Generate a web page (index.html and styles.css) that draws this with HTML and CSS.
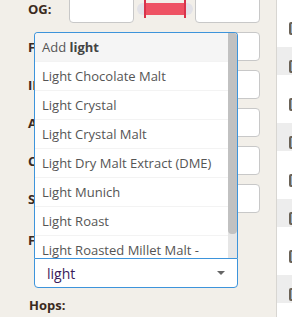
FILE: index.html
```html
<!DOCTYPE html>
<html lang="en">
<head>
    <meta charset="UTF-8">
    <title>Recipe</title>
    <link rel="stylesheet" href="styles.css">
</head>
<body>

    <div class="main">
        <div class="row">
            <label>OG:</label>
            <input class="field short" type="text">
            <div class="range"><div class="range-bar"></div></div>
            <input class="field short" type="text">
        </div>
        <div class="row"><label>FG:</label><input class="field" type="text"></div>
        <div class="row"><label>IBU:</label><input class="field" type="text"></div>
        <div class="row"><label>ABV:</label><input class="field" type="text"></div>
        <div class="row"><label>Color:</label><input class="field" type="text"></div>
        <div class="row"><label>SRM:</label><input class="field" type="text"></div>

        <h4 class="section">Fermentables:</h4>
        <div class="select-wrap">
            <div class="dropdown">
                <ul class="results">
                    <li class="active">Add <b>light</b></li>
                    <li>Light Chocolate Malt</li>
                    <li>Light Crystal</li>
                    <li>Light Crystal Malt</li>
                    <li>Light Dry Malt Extract (DME)</li>
                    <li>Light Munich</li>
                    <li>Light Roast</li>
                    <li>Light Roasted Millet Malt - Gluten Free</li>
                </ul>
                <div class="scrollbar"><div class="thumb"></div></div>
            </div>
            <div class="select">
                <span class="typed">light</span>
                <span class="caret"></span>
            </div>
        </div>

        <h4 class="section">Hops:</h4>
    </div>

    <div class="side">
        <div class="side-row"><span class="icon"></span></div>
        <div class="side-row"><span class="icon"></span></div>
        <div class="side-row"><span class="icon"></span></div>
        <div class="side-row"><span class="icon"></span></div>
        <div class="side-row"><span class="icon"></span></div>
        <div class="side-row"><span class="icon"></span></div>
        <div class="side-row"><span class="icon"></span></div>
        <div class="side-row"><span class="icon"></span></div>
        <div class="side-row"><span class="icon"></span></div>
    </div>

</body>
</html>
```

FILE: styles.css
```css
body {
    margin: 0; overflow: hidden;
    background: #f2efe9;
    font-family: 'Open Sans', sans-serif;
    display: flex; height: 100vh;
}

/* Form column */
.main { width: 276px; flex: none; margin-top: -6px; padding-left: 28px; box-sizing: border-box; }

.row { display: flex; align-items: center; height: 29px; margin-bottom: 9px; }
.row label {
    width: 41px; flex: none;
    font-weight: 700; font-size: 13px; color: #3b2a20;
}
.field {
    width: 191px; height: 29px; box-sizing: border-box; margin: 0;
    border: 1px solid #c8c8c8; border-radius: 4px; background: #fff;
}
.field.short { width: 65px; }

/* OG range slider */
.range {
    width: 56px; height: 12px; margin: 0 2px 0 3px;
    background: #e2e2e8; border-radius: 6px;
    display: flex; align-items: center; justify-content: center;
}
.range-bar {
    width: 38px; height: 12px; background: #ee5263;
    border-left: 2px solid #d8334a; border-right: 2px solid #d8334a;
    position: relative;
}
.range-bar::before, .range-bar::after {
    content: ""; position: absolute; top: -3px; width: 2px; height: 18px; background: #d8334a;
}
.range-bar::before { left: -2px; }
.range-bar::after { right: -2px; }

.section {
    margin: 0; font-size: 13px; font-weight: 700; color: #3b2a20;
    line-height: 18px;
}
.main > .section:first-of-type { margin-top: 18px; margin-bottom: 9px; }
.main > .section:last-child { margin-top: 8px; margin-left: 1px; }

/* Select2-like box with open dropdown */
.select-wrap { position: relative; margin-left: 6px; width: 204px; }
.select {
    height: 30px; box-sizing: border-box;
    border: 1px solid #3d94db; border-radius: 0 0 4px 4px;
    background: #fff; display: flex; align-items: center;
    padding: 0 12px 0 12px;
    font-size: 14px; color: #3a1a5a;
}
.typed { flex: 1; }
.caret {
    width: 0; height: 0;
    border-left: 4px solid transparent; border-right: 4px solid transparent;
    border-top: 4px solid #666;
}

.dropdown {
    position: absolute; bottom: 100%; left: 0; right: 0;
    height: 226px; box-sizing: border-box;
    background: #fff; border: 1px solid #3d94db; border-bottom: none;
    border-radius: 4px 4px 0 0; overflow: hidden;
    display: flex; z-index: 10;
}
.results {
    list-style: none; margin: 0; padding: 0; flex: 1;
    font-size: 13px; color: #555;
}
.results li {
    padding: 6px 7px; line-height: 16px;
    border-bottom: 1px solid #f3f3f3;
}
.results li.active { background: #f5f5f5; }
.results b { color: #444; }

.scrollbar { width: 9px; flex: none; background: #e6e6e6; }
.thumb { height: 201px; background: #c1c1c1; border-radius: 0 0 4px 4px; }

/* Right panel */
.side { flex: 1; border-left: 1px solid #d8d6d2; background: #fff; margin-top: -29px; }
.side-row { height: 38px; padding: 13px 0 0 12px; box-sizing: border-box; }
.side-row:nth-child(odd) { background: linear-gradient(#ededed 28px, transparent 28px); }
.icon {
    display: block; width: 14px; height: 13px; box-sizing: border-box;
    background: #8fb0d0; border: 2px solid #6b6256; border-radius: 2px;
}
```
